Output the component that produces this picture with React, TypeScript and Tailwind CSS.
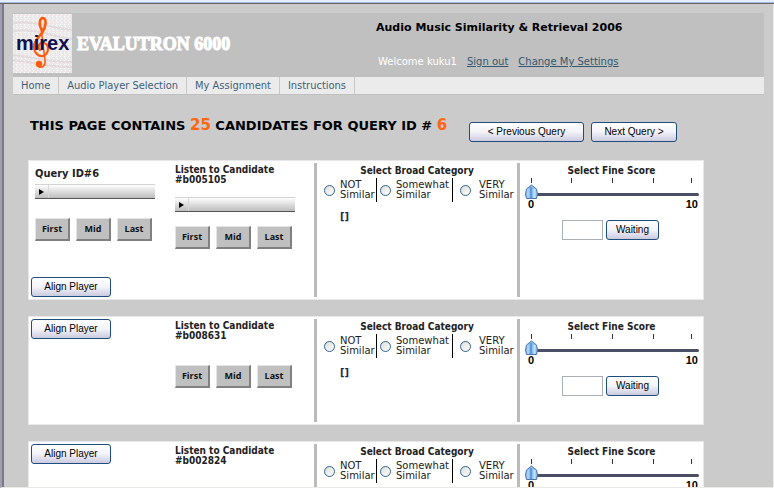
import React, { useState } from "react";

interface Candidate {
  id: string;
  query?: string;
  hasPlayer: boolean;
}

const candidates: Candidate[] = [
  { id: "b005105", query: "6", hasPlayer: true },
  { id: "b008631", hasPlayer: false },
  { id: "b002824", hasPlayer: false },
];

const navItems = ["Home", "Audio Player Selection", "My Assignment", "Instructions"];

const categories = [
  { top: "NOT", cell: "w-[53px] border-r", gap: "gap-[5px]" },
  { top: "Somewhat", cell: "w-[76px] border-r pl-[3px]", gap: "gap-[5px]" },
  { top: "VERY", cell: "flex-1 pl-[7px]", gap: "gap-[8px]" },
];

function Logo() {
  return (
    <svg width="59" height="59" viewBox="0 0 59 59" className="shrink-0" role="img" aria-label="mirex">
      <defs>
        <pattern id="speckle" width="4" height="4" patternUnits="userSpaceOnUse">
          <rect width="4" height="4" fill="#ebe9ea" />
          <rect x="0" y="0" width="1" height="1" fill="#fff" />
          <rect x="2" y="0" width="1" height="1" fill="#dde8ee" />
          <rect x="1" y="1" width="1" height="1" fill="#f4e2e8" />
          <rect x="3" y="2" width="1" height="1" fill="#fff" />
          <rect x="1" y="3" width="1" height="1" fill="#e1ebe1" />
        </pattern>
      </defs>
      <rect width="59" height="59" fill="url(#speckle)" />
      <g fill="none" stroke="#dccdd1" strokeWidth="2" opacity="0.5">
        <path d="M0 9C20 6 38 14 59 16" />
        <path d="M0 17C20 14 38 22 59 25" />
        <path d="M0 41C20 43 38 49 59 48" />
        <path d="M0 46C20 48 38 54 59 53" />
      </g>
      <g fill="none" stroke="#ff5a0a" strokeLinecap="round">
        <path d="M29 16C25 10 27 4 30 4C34 5 33 13 29 19C26 23 21 27 21 33" strokeWidth="2.6" />
        <path d="M21 33C21 39 26 43 30 42C36 40 37 31 31 29C26 28 24 33 27 36" strokeWidth="2.2" />
        <path d="M28 14L32 46C33 52 29 54 26 53" strokeWidth="1.5" />
      </g>
      <circle cx="26" cy="50" r="3.2" fill="#ff5a0a" />
      <text x="3" y="36" fontSize="20" fontWeight="bold" fill="#10104f" fontFamily="'Liberation Sans', Arial, sans-serif">
        mirex
      </text>
    </svg>
  );
}

function XpButton({ children, className }: { children: React.ReactNode; className: string }) {
  return (
    <button
      type="button"
      className={`h-5 rounded-[3px] border border-[#1f4d7d] bg-linear-to-b from-white via-[#f3f3f9] to-[#cbcbe0] font-['Liberation_Sans',Arial,sans-serif] text-[10px] leading-4 text-black ${className}`}
    >
      {children}
    </button>
  );
}

function Player() {
  return (
    <div className="flex h-[15px] w-[120px] border-t border-b border-t-[#d4d4d4] border-b-[#555] bg-linear-to-b from-white to-[#bdbdbd]">
      <button type="button" aria-label="Play" className="flex w-[14px] items-center justify-center border-r border-[#d8d8d8]">
        <svg width="5" height="6" viewBox="0 0 5 6">
          <path d="M0 0L5 3L0 6Z" fill="#000" />
        </svg>
      </button>
    </div>
  );
}

function SeekButtons() {
  return (
    <div className="flex gap-[6px]">
      {["First", "Mid", "Last"].map((label) => (
        <button
          key={label}
          type="button"
          className="h-[23px] w-[35px] border-t border-r-2 border-b-2 border-l border-t-[#e4e4e4] border-r-[#808080] border-b-[#808080] border-l-[#e4e4e4] bg-[#c0c0c0] font-['Open_Sans',sans-serif] text-[9px] leading-4 font-bold text-[#111]"
        >
          {label}
        </button>
      ))}
    </div>
  );
}

function CategoryPicker({ id }: { id: string }) {
  return (
    <fieldset className="min-w-0">
      <legend className="mx-auto h-3 text-[10px] leading-3 font-bold">Select Broad Category</legend>
      <div className="mt-px flex h-6 pl-[7px]">
        {categories.map((c) => (
          <label
            key={c.top}
            className={`flex shrink-0 items-center border-black font-['DejaVu_Sans',Verdana,sans-serif] text-[10px] leading-[10px] ${c.cell} ${c.gap}`}
          >
            <input
              type="radio"
              name={`category-${id}`}
              className="size-[11px] shrink-0 appearance-none rounded-full border border-[#2f648f] bg-linear-to-br from-[#dcdcd6] to-white checked:bg-[#2f648f]"
            />
            <span>
              {c.top}
              <br />
              Similar
            </span>
          </label>
        ))}
      </div>
      <p className="mt-[9px] pl-[23px] text-[11px] leading-3 font-bold text-[#1c2a55]">[]</p>
    </fieldset>
  );
}

function FineScore({ id }: { id: string }) {
  const [score, setScore] = useState(0);

  return (
    <div>
      <h3 className="text-center text-[10px] leading-3 font-bold">Select Fine Score</h3>
      <div className="relative mt-px ml-[5px] h-[21px] w-[175px]">
        <svg width="175" height="21" viewBox="0 0 175 21" className="block">
          <path d="M6.5 0V5M46.5 0V5M87.5 0V5M128.5 0V5M166.5 0V5" stroke="#333" strokeWidth="1" />
          <rect x="7" y="15" width="167" height="3" rx="1.5" fill="#4a4f66" />
          <g transform={`translate(${score * 16} 0)`}>
            <path d="M6.5 7L11.5 11L12.5 16L11.5 20.5H1.5L0.5 16L1.5 11Z" fill="#8fc0ee" stroke="#4a74a8" strokeWidth="1" />
            <path d="M3 11V20" stroke="#c3def6" strokeWidth="1" />
            <path d="M6 9V20" stroke="#5f9ade" strokeWidth="2" />
            <path d="M9.5 11V20" stroke="#bfe4fb" strokeWidth="2" />
          </g>
        </svg>
        <input
          type="range"
          min={0}
          max={10}
          value={score}
          aria-label={`Fine score for ${id}`}
          onChange={(e) => setScore(Number(e.target.value))}
          className="absolute inset-0 w-full opacity-0"
        />
      </div>
      <div className="flex w-[178px] justify-between pl-[8px] font-['Liberation_Sans',Arial,sans-serif] text-[11px] leading-[10px] font-bold text-black">
        <span>0</span>
        <span>10</span>
      </div>
      <div className="mt-[11px] flex gap-[3px] pl-[42px]">
        <input type="text" aria-label={`Score value for ${id}`} className="h-5 w-[41px] border border-[#a9b0b8] bg-white px-1" />
        <XpButton className="w-[53px]">Waiting</XpButton>
      </div>
    </div>
  );
}

function CandidateCard({ id, query, hasPlayer }: Candidate) {
  return (
    <section
      className={`grid grid-cols-[142fr_143fr_206fr_183fr] border border-[#e8e8e8] bg-white py-[2px] ${hasPlayer ? "min-h-[140px]" : "min-h-[109px]"}`}
    >
      <div className="flex flex-col items-start pl-[2px]">
        {query && (
          <div className="mb-auto pt-[5px] pl-[4px]">
            <h3 className="mb-[4px] text-[11px] leading-3 font-bold">Query ID#{query}</h3>
            <Player />
            <div className="mt-[19px]">
              <SeekButtons />
            </div>
          </div>
        )}
        <XpButton className="w-[80px]">Align Player</XpButton>
      </div>

      <div className="pt-[2px] pl-[4px]">
        <h3 className="text-[10px] leading-[10px] font-bold">
          Listen to Candidate
          <br />#{id}
        </h3>
        {hasPlayer ? (
          <div className="mt-[12px] mb-[14px]">
            <Player />
          </div>
        ) : (
          <div className="h-[24px]" />
        )}
        <SeekButtons />
      </div>

      <div className="border-x-3 border-[#bbb] pt-[2px]">
        <CategoryPicker id={id} />
      </div>

      <div className="pt-[2px]">
        <FineScore id={id} />
      </div>
    </section>
  );
}

export default function App() {
  return (
    <div className="flex h-screen flex-col overflow-hidden bg-[#cbcbcb] font-['DejaVu_Sans_Condensed','DejaVu_Sans',Verdana,sans-serif] text-[#222]">
      <div className="h-[4px] shrink-0 border-t-2 border-b border-t-[#e6edfa] border-b-[#666] bg-[#a9b8dd]" />

      <div className="flex min-h-0 flex-1 border-b border-l-2 border-b-[#e9e9e6] border-l-[#9d9db8]">
        <div className="min-w-0 flex-1 overflow-hidden border-r border-l-2 border-r-[#e9e9e9] border-l-[#7c7880] px-[9px] pt-[9px]">
          {/* Header */}
          <header className="flex h-[64px] bg-[#c0c0c0] pt-px">
            <div className="flex w-[363px] items-start gap-[5px]">
              <Logo />
              <h1 className="mt-[16px] font-['Liberation_Serif','Times_New_Roman',serif] text-[18px] leading-7 font-bold whitespace-nowrap text-white [-webkit-text-stroke:1px_white]">
                EVALUTRON 6000
              </h1>
            </div>
            <div className="font-['DejaVu_Sans',Verdana,sans-serif]">
              <h2 className="mt-[6px] text-[11px] leading-4 font-bold text-black">
                Audio Music Similarity &amp; Retrieval 2006
              </h2>
              <p className="mt-[18px] flex gap-[10px] pl-[2px] text-[10px] leading-4 text-white">
                <span>Welcome kuku1</span>
                <a href="#signout" className="text-[#33576f] underline">Sign out</a>
                <a href="#settings" className="text-[#33576f] underline">Change My Settings</a>
              </p>
            </div>
          </header>

          {/* Navigation */}
          <nav className="flex h-[18px] border-b border-[#c0c0c0] bg-[#ebebeb]">
            {navItems.map((item) => (
              <a
                key={item}
                href="#nav"
                className="border-r border-[#c8c8c8] px-2 text-[11px] leading-[18px] text-[#3f5f7b]"
              >
                {item}
              </a>
            ))}
          </nav>

          {/* Page title */}
          <div className="mt-[20px] flex items-start pl-[17px]">
            <h2 className="w-[439px] font-['DejaVu_Sans',Verdana,sans-serif] text-[13px] leading-5 font-bold whitespace-nowrap text-black">
              THIS PAGE CONTAINS <span className="text-[15px] text-[#ff6610]">25</span> CANDIDATES FOR QUERY ID #{" "}
              <span className="text-[15px] text-[#ff6610]">6</span>
            </h2>
            <div className="flex gap-[7px] pt-[7px]">
              <XpButton className="w-[115px]">&lt; Previous Query</XpButton>
              <XpButton className="w-[86px]">Next Query &gt;</XpButton>
            </div>
          </div>

          {/* Candidates */}
          <main className="mt-[18px] ml-[15px] flex max-w-[676px] flex-col gap-4">
            {candidates.map((c) => (
              <CandidateCard key={c.id} {...c} />
            ))}
          </main>
        </div>
      </div>
    </div>
  );
}
